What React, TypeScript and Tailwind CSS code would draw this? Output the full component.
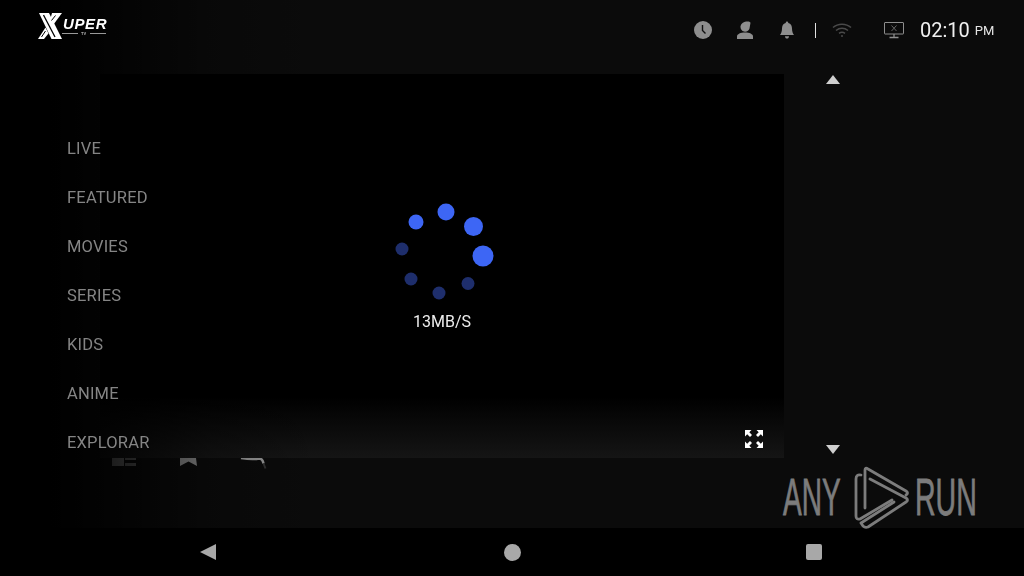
import React from "react";

const menu = ["LIVE", "FEATURED", "MOVIES", "SERIES", "KIDS", "ANIME", "EXPLORAR"];

const dots = [
  { x: 483, y: 256, r: 10.5, c: "#3d66f5" },
  { x: 473.5, y: 226.5, r: 9.5, c: "#3d66f5" },
  { x: 446, y: 212, r: 8.5, c: "#3d66f5" },
  { x: 416, y: 222, r: 7.5, c: "#3d66f5" },
  { x: 402, y: 249, r: 6.5, c: "#1e2e6c" },
  { x: 411, y: 279, r: 6.5, c: "#1e2e6c" },
  { x: 439, y: 293, r: 6.5, c: "#1e2e6c" },
  { x: 468, y: 283.5, r: 6.5, c: "#1e2e6c" },
];

function Logo() {
  return (
    <div className="relative w-[70px] h-[28px] ml-[37px] mt-[12px] will-change-transform">
      <svg width="27" height="28" viewBox="0 0 27 28" className="absolute left-0 top-0">
        <path d="M2 1h10l13 26H14.500z" fill="#fff" />
        <path d="M6.500 3l11.500 22" stroke="#000" strokeWidth="1.300" />
        <path d="M15 1h10L16.500 12.500l-3-6z" fill="#fff" />
        <path d="M18.500 3.500l-4 5" stroke="#000" strokeWidth="1" />
        <path d="M8.500 15.500l3 6L7 27H1z" fill="#fff" />
        <path d="M8.500 19l-4 6" stroke="#000" strokeWidth="1" />
      </svg>
      <span className="absolute left-[26px] top-[5px] text-[15px] leading-[14px] font-bold italic text-white font-['Liberation_Sans',sans-serif] tracking-[0.6px]">
        UPER
      </span>
      <div className="absolute left-[25px] top-[21px] w-[16px] h-[1px] bg-[#999]" />
      <div className="absolute left-[53px] top-[21px] w-[16px] h-[1px] bg-[#999]" />
      <span className="absolute left-[44px] top-[19px] text-[4px] leading-[5px] font-bold text-[#bbb] font-['Liberation_Sans',sans-serif]">
        TV
      </span>
    </div>
  );
}

function StatusIcons() {
  return (
    <div className="flex items-center h-[60px] pr-[30px] font-['Roboto',sans-serif] will-change-transform">
      <svg width="18" height="18" viewBox="0 0 18 18" className="mr-[24px]">
        <circle cx="9" cy="9" r="9" fill="#8e8e8e" />
        <path d="M8.500 4v5.500l3 3" fill="none" stroke="#111" strokeWidth="1.400" />
      </svg>
      <svg width="18" height="18" viewBox="0 0 18 18" className="mr-[25px]">
        <path d="M4.500 5.500C5 2 8 .5 11.500.5c1.500 0 2.500.5 3 1.200L13.500 7.500c-.5 2-2.200 3.200-4.500 3.200-2.500 0-4.500-2-4.500-5.200z" fill="#8e8e8e" />
        <path d="M1 18v-2.500C1 13 4.500 11.500 9 11.500s8 1.500 8 4V18z" fill="#8e8e8e" />
      </svg>
      <svg width="16" height="18" viewBox="0 0 16 18" className="mr-[20px]">
        <path d="M8 0.500c.8 0 1.300.6 1.300 1.500 2.700.7 3.700 3 3.700 5.500 0 3 .8 5 2 6.500H1c1.200-1.500 2-3.500 2-6.500 0-2.500 1-4.800 3.700-5.500C6.700 1.100 7.200.5 8 .5z" fill="#8e8e8e" />
        <path d="M6 15.200h4c0 1.500-.9 2.300-2 2.300s-2-.8-2-2.300z" fill="#8e8e8e" />
      </svg>
      <div className="w-[1px] h-[15px] bg-[#e0e0e0] mr-[16px]" />
      <svg width="20" height="16" viewBox="0 0 20 16" className="mr-[32px]" fill="none" stroke="#4a4a4a" strokeWidth="1.500">
        <path d="M1 5.500C6 1 14 1 19 5.500" />
        <path d="M4 8.500c3.500-3 8.500-3 12 0" />
        <path d="M7 11.300c2-1.500 4-1.500 6 0" />
        <circle cx="10" cy="14" r="1" fill="#4a4a4a" stroke="none" />
      </svg>
      <svg width="20" height="17" viewBox="0 0 20 17" className="mr-[16px]" fill="none" stroke="#8e8e8e" strokeWidth="1">
        <rect x="0.500" y="0.500" width="19" height="11.500" rx="0.500" />
        <path d="M7.500 3.500l5 5.500M12.500 3.500l-5 5.500" stroke="#666" />
        <path d="M10 12v3M5.500 15.500h9" strokeWidth="1.300" />
      </svg>
      <span className="text-[20px] leading-[24px] text-[#f0f0f0]">02:10</span>
      <span className="text-[13px] leading-[24px] text-[#e4e4e4] ml-[5px] mt-[2px]">PM</span>
    </div>
  );
}

function VideoPanel() {
  return (
    <div className="relative w-[684px] h-[384px] bg-[linear-gradient(to_bottom,#000_0%,#000_84%,#151515_100%)] z-10">
      <svg width="684" height="384" viewBox="100 74 684 384" className="absolute inset-0">
        {dots.map((d, i) => (
          <circle key={i} cx={d.x} cy={d.y} r={d.r} fill={d.c} />
        ))}
      </svg>
      <div className="absolute left-[313px] top-[239px] text-[16px] leading-[18px] text-[#eeeeee] font-['Roboto',sans-serif] will-change-transform">
        13MB/S
      </div>
      <svg width="20" height="20" viewBox="0 0 20 20" className="absolute left-[644px] top-[355px]" fill="#fff">
        <path d="M1 1h6.500L5.300 3.200 8 6 6 8 3.200 5.300 1 7.500z" />
        <path d="M19 1h-6.500l2.200 2.200L12 6l2 2 2.800-2.700L19 7.500z" />
        <path d="M1 19h6.500l-2.200-2.200L8 14l-2-2-2.800 2.700L1 12.500z" />
        <path d="M19 19h-6.500l2.200-2.200L12 14l2-2 2.800 2.700 2.200-2.200z" />
      </svg>
    </div>
  );
}

function Watermark() {
  return (
    <svg width="210" height="66" viewBox="0 0 210 66" className="absolute left-[780px] top-[464px] z-20">
      <text transform="translate(3 51) scale(0.55 1)" fontSize="51" fill="#7c7c7c" stroke="#7c7c7c" strokeWidth="0.8" fontFamily="'Liberation Sans', sans-serif">
        ANY
      </text>
      <g fill="none" stroke="#7c7c7c" strokeWidth="2.800" strokeLinejoin="round" strokeLinecap="round">
        <path d="M81 11Q76 10 76 15V52Q76 56 80 55L112 36" />
        <path d="M85 44V6Q85 3 88 5L126 27Q129 29 126 31" />
        <path d="M90 15L126 34Q129 36 126 38L88 63Q85 64 83 62L81 59L114 38" />
      </g>
      <text transform="translate(135 51) scale(0.56 1)" fontSize="51" fill="#7c7c7c" stroke="#7c7c7c" strokeWidth="0.8" fontFamily="'Liberation Sans', sans-serif">
        RUN
      </text>
    </svg>
  );
}

export default function App() {
  return (
    <div className="relative w-[1024px] h-[576px] overflow-hidden bg-black flex flex-col font-['Roboto',sans-serif]">
      <div className="relative h-[528px] flex flex-col bg-[#0b0b0b]">
        <div className="flex justify-between h-[74px] relative z-30">
          <Logo />
          <StatusIcons />
        </div>
        <div className="flex pl-[100px]">
          <VideoPanel />
          <div className="flex flex-col justify-between items-center w-[98px] h-[384px] pt-[1px] pb-[3px]">
            <div className="w-0 h-0 border-x-[7px] border-x-transparent border-b-[9px] border-b-[#cfcfcf]" />
            <div className="w-0 h-0 border-x-[7px] border-x-transparent border-t-[9px] border-t-[#cfcfcf] relative top-[-1px]" />
          </div>
        </div>

        {/* partially hidden row beneath the video */}
        <svg width="180" height="20" viewBox="0 0 180 20" className="absolute left-[105px] top-[452px]">
          <rect x="7" y="6" width="12" height="8" fill="#6c6c6c" />
          <rect x="20" y="6" width="11" height="2" fill="#5c5c5c" />
          <rect x="20" y="11" width="11" height="3" fill="#5c5c5c" />
          <path d="M75 6H91L92 14L83.500 9.500L75 14Z" fill="#8a8a8a" />
          <path d="M136 6c6 1 13 1.500 18 .5 2 0 4 2 4.500 5" fill="none" stroke="#999" strokeWidth="2.500" />
          <path d="M158.500 11.500l2 5" fill="none" stroke="#333" strokeWidth="2" />
        </svg>

        {/* left fade over the page */}
        <div className="absolute left-0 top-0 w-[320px] h-full z-20 pointer-events-none bg-[linear-gradient(to_right,#000_0px,#000_50px,rgba(0,0,0,0.75)_110px,rgba(0,0,0,0.25)_210px,rgba(0,0,0,0)_100%)]" />

        <nav className="absolute left-[67px] top-[125px] z-30 flex flex-col will-change-transform">
          {menu.map((m) => (
            <div key={m} className="h-[49px] flex items-center text-[16.5px] text-[#858585] tracking-[0.2px]">
              {m}
            </div>
          ))}
        </nav>

        <Watermark />
      </div>

      <div className="h-[48px] bg-black flex items-center">
        <div className="flex items-center pl-[200px]">
          <div className="w-0 h-0 border-y-[8px] border-y-transparent border-r-[16px] border-r-[#a8a8a8]" />
          <div className="w-[17px] h-[17px] rounded-full bg-[#a8a8a8] ml-[288px]" />
          <div className="w-[16px] h-[16px] rounded-[2px] bg-[#a8a8a8] ml-[285px]" />
        </div>
      </div>
    </div>
  );
}
